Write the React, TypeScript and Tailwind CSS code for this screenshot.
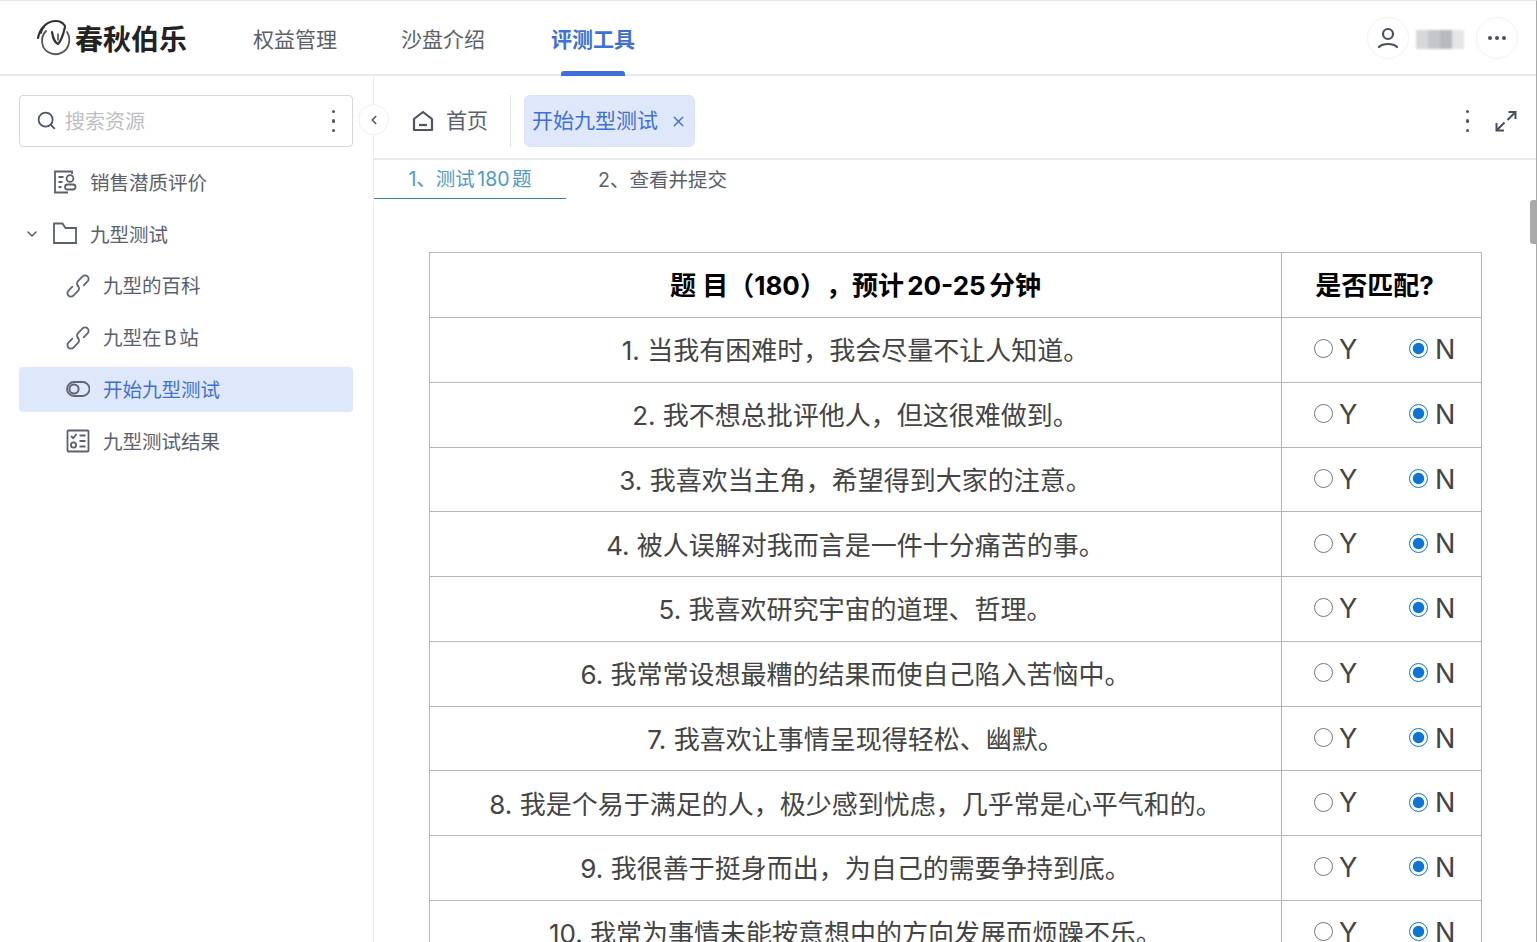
import { ChevronDown, ChevronLeft, Search, X } from "lucide-react";

const questions = [
  "1. 当我有困难时，我会尽量不让人知道。",
  "2. 我不想总批评他人，但这很难做到。",
  "3. 我喜欢当主角，希望得到大家的注意。",
  "4. 被人误解对我而言是一件十分痛苦的事。",
  "5. 我喜欢研究宇宙的道理、哲理。",
  "6. 我常常设想最糟的结果而使自己陷入苦恼中。",
  "7. 我喜欢让事情呈现得轻松、幽默。",
  "8. 我是个易于满足的人，极少感到忧虑，几乎常是心平气和的。",
  "9. 我很善于挺身而出，为自己的需要争持到底。",
  "10. 我常为事情未能按意想中的方向发展而烦躁不乐。",
];

function Logo() {
  return (
    <svg width="40" height="40" viewBox="0 0 40 40" fill="none" stroke="#333" strokeWidth="1.8" strokeLinecap="round">
      <path d="M3 20C5 10 12 3 21 3C25 3 28 5 30 8" strokeWidth="2.2" />
      <path d="M9 9C7 11 6 13 6 15" />
      <path d="M11 13C5 19 6 30 13 34C21 39 32 35 34 25C35 20 34 17 32 14" stroke="#555" />
      <path d="M17 14C18 20 19 24 23 26C25 24 28 18 30 9" strokeWidth="2.2" />
      <path d="M23 16V22" strokeWidth="1.4" />
    </svg>
  );
}

function ReportIcon() {
  return (
    <svg width="24" height="24" viewBox="0 0 24 24" fill="none" stroke="#5a616c" strokeWidth="1.8">
      <path d="M19 4V1.5H2V22.5H15" />
      <path d="M5.5 7h5M5.5 12h4M5.5 17h3" />
      <circle cx="17" cy="8.5" r="3.4" />
      <rect x="12" y="14.5" width="10.5" height="5" rx="2.5" />
    </svg>
  );
}

function FolderIcon() {
  return (
    <svg width="24" height="24" viewBox="0 0 24 24" fill="none" stroke="#5a616c" strokeWidth="1.8">
      <path d="M1 1.5h8.5l3 4.5H23v15H1z" />
    </svg>
  );
}

function ChainIcon() {
  return (
    <svg width="24" height="24" viewBox="0 0 24 24" fill="none" stroke="#5f6672" strokeWidth="1.8" strokeLinecap="round" className="overflow-visible">
      <g transform="rotate(-45 12 12)">
        <path d="M7.5 8.5H2a3.5 3.5 0 0 0 0 7H8.5a3.5 3.5 0 0 0 3.5-3.5" />
        <path d="M16.5 15.5H22a3.5 3.5 0 0 0 0-7H15.5a3.5 3.5 0 0 0-3.5 3.5" />
      </g>
    </svg>
  );
}

function SwitchIcon() {
  return (
    <svg width="24" height="24" viewBox="0 0 24 24" fill="none" stroke="#5f6672" strokeWidth="1.8">
      <rect x="1" y="5" width="22.5" height="14" rx="7" />
      <circle cx="8" cy="12" r="4.6" strokeWidth="2" />
    </svg>
  );
}

function ResultIcon() {
  return (
    <svg width="24" height="24" viewBox="0 0 24 24" fill="none" stroke="#5a616c" strokeWidth="1.8">
      <rect x="1.5" y="1.5" width="21" height="21" rx="1" />
      <path d="M5 7l2.2 2.2L10.5 5M13.5 6.5h6M13.5 12h6M13.5 17.5h6" />
      <circle cx="7.5" cy="16" r="2.6" />
    </svg>
  );
}

function HomeIcon() {
  return (
    <svg width="22" height="22" viewBox="0 0 22 22" fill="none" stroke="#4e5560" strokeWidth="2.2" strokeLinejoin="round">
      <path d="M2 9l9-7 9 7v11H2z" />
      <path d="M7 15h8" />
    </svg>
  );
}

function ExpandIcon() {
  return (
    <svg width="22" height="22" viewBox="0 0 22 22" fill="none" stroke="#47505c" strokeWidth="2">
      <path d="M13.5 2H20.5V9M20.5 2L12.5 10M1.5 13V20.5H9M1.5 20.5L9.5 12.5" />
    </svg>
  );
}

function UserIcon() {
  return (
    <svg width="24" height="24" viewBox="0 0 24 24" fill="none" stroke="#47505c" strokeWidth="2.2" strokeLinecap="round">
      <circle cx="12" cy="8" r="5" />
      <path d="M3 21c4-4 14-4 18 0" />
    </svg>
  );
}

function VDots({ className = "" }: { className?: string }) {
  return (
    <span className={`flex flex-col gap-[6px] ${className}`}>
      <i className="block w-[3.5px] h-[3.5px] rounded-full bg-[#4b5563]" />
      <i className="block w-[3.5px] h-[3.5px] rounded-full bg-[#4b5563]" />
      <i className="block w-[3.5px] h-[3.5px] rounded-full bg-[#4b5563]" />
    </span>
  );
}

function SideItem({ icon, label, level = 0, active = false }: { icon: React.ReactNode; label: string; level?: number; active?: boolean }) {
  return (
    <div
      className={`flex items-center h-[45px] mt-[6.8px] rounded-[4px] gap-[13px] text-[19.5px] ${
        level ? "pl-[47px]" : "pl-[34px]"
      } ${active ? "bg-[#dfe8fb] text-[#3f6fd8]" : "text-[#5a616c]"}`}
    >
      {icon}
      <span className="pt-[2px]">{label}</span>
    </div>
  );
}

export default function App() {
  return (
    <div className="relative flex flex-col h-[942px] overflow-hidden bg-white border-t border-r border-t-[#e5e6e8] border-r-[#a8a8a8] font-['Inter','Noto_Sans_CJK_SC',sans-serif] [text-autospace:normal] [text-spacing-trim:space-all]">
      <header className="flex items-center h-[75px] shrink-0 border-b-2 border-[#e8e9eb]">
        <div className="flex items-center ml-[35px] w-[218px]">
          <Logo />
          <span className="text-[28px] leading-none font-bold text-[#222] font-['Noto_Sans_CJK_SC',sans-serif]">春秋伯乐</span>
        </div>
        <nav className="flex h-full text-[21px] text-[#5a616c] gap-[64px] pt-[4px]">
          <span className="flex items-center">权益管理</span>
          <span className="flex items-center">沙盘介绍</span>
          <span className="relative flex items-center ml-[2px] font-bold text-[#3f6fd8]">
            评测工具
            <i className="absolute left-[10px] right-[10px] bottom-[-2px] h-[5px] rounded-t-[3px] bg-[#3f6fd8]" />
          </span>
        </nav>
        <div className="ml-auto flex items-center mr-[18px]">
          <span className="flex items-center justify-center w-[42px] h-[42px] rounded-full border border-[#f3f3f4]">
            <UserIcon />
          </span>
          <span className="flex ml-[7px] mt-[4px] h-[19px] w-[48px] blur-[1px]">
            <i className="w-[12px] bg-[#d6d8da]" />
            <i className="w-[12px] bg-[#c4c7ca]" />
            <i className="w-[12px] bg-[#b6babd]" />
            <i className="w-[12px] bg-[#e3e5e7]" />
          </span>
          <span className="flex items-center justify-center gap-[3px] ml-[12px] w-[42px] h-[42px] rounded-full border border-[#f3f3f4]">
            <i className="w-[4px] h-[4px] rounded-full bg-[#47505c]" />
            <i className="w-[4px] h-[4px] rounded-full bg-[#47505c]" />
            <i className="w-[4px] h-[4px] rounded-full bg-[#47505c]" />
          </span>
        </div>
      </header>

      <div className="flex flex-1 min-h-0">
        <aside className="relative w-[374px] shrink-0 border-r border-[#eceded] pl-[19px] pr-[20px] pt-[19px]">
          <div className="flex items-center h-[52px] rounded-[4px] border border-[#d5d7da] pl-[16px] pr-[17px]">
            <Search size={21} strokeWidth={2} className="text-[#4b5563] -mt-[2px]" />
            <span className="ml-[8px] pt-[2px] text-[20px] text-[#bcbfc4]">搜索资源</span>
            <VDots className="ml-auto" />
          </div>
          <div className="pt-[6px]">
            <SideItem icon={<ReportIcon />} label="销售潜质评价" />
            <div className="flex items-center h-[45px] mt-[6.8px] text-[19.5px] text-[#5a616c]">
              <ChevronDown size={16} strokeWidth={2} className="ml-[5px] mr-[13px] text-[#4b5563]" />
              <FolderIcon />
              <span className="ml-[13px] pt-[3px]">九型测试</span>
            </div>
            <SideItem level={1} icon={<ChainIcon />} label="九型的百科" />
            <SideItem level={1} icon={<ChainIcon />} label="九型在B站" />
            <SideItem level={1} active icon={<SwitchIcon />} label="开始九型测试" />
            <SideItem level={1} icon={<ResultIcon />} label="九型测试结果" />
          </div>
          <button className="absolute right-[-16px] top-[28px] flex items-center justify-center w-[31px] h-[31px] rounded-full bg-white border border-[#f0f0f1]">
            <ChevronLeft size={14} strokeWidth={2.6} className="text-[#4b5563]" />
          </button>
        </aside>

        <main className="flex-1 min-w-0">
          <div className="flex items-center h-[84px] pt-[8px] border-b-2 border-[#e8e9eb]">
            <div className="flex items-center ml-[38px] gap-[12px] text-[21px] text-[#5a616c]">
              <HomeIcon />
              <span>首页</span>
            </div>
            <i className="ml-[22px] h-[52px] w-px bg-[#e3e4e6]" />
            <div className="flex items-center h-[52px] ml-[13px] pl-[7px] pr-[7px] gap-[12px] rounded-[6px] border border-[#d9e3f8] bg-[#dfe8fb] text-[21px] text-[#3f6fd8]">
              <span>开始九型测试</span>
              <X size={17} strokeWidth={2} />
            </div>
            <VDots className="ml-auto mr-[26px]" />
            <span className="mr-[19px]">
              <ExpandIcon />
            </span>
          </div>
          <div className="flex h-[39px] text-[19.5px]">
            <span className="flex items-center justify-center w-[192px] pt-[2px] border-b border-[#3f7fb5] text-[#4e9ac8]">1、测试180题</span>
            <span className="flex items-center pt-[2px] ml-[32px] text-[#5a616c]">2、查看并提交</span>
          </div>
          <table className="mt-[53px] ml-[55px] w-[1053px] table-fixed border-collapse text-[26px] text-[#444]">
            <colgroup>
              <col className="w-[852px]" />
              <col />
            </colgroup>
            <thead>
              <tr className="h-[65px] text-black">
                <th className="border border-[#b5b5b5] font-bold text-center">题 目（180），预计20-25分钟</th>
                <th className="border border-[#b5b5b5] pr-[14px] font-bold text-center">是否匹配?</th>
              </tr>
            </thead>
            <tbody>
              {questions.map((q, i) => (
                <tr key={q} className="h-[64.75px]">
                  <td className="border border-[#b5b5b5] pt-[2px] text-center">{q}</td>
                  <td className="border border-[#b5b5b5] pl-[32px] pt-[1px] text-[27px]">
                    <div className="flex">
                      <label className="flex items-center gap-[6px] w-[95px]">
                        <input type="radio" name={`q${i}`} className="w-[19px] h-[19px] m-0 -mt-[3px]" />
                        Y
                      </label>
                      <label className="flex items-center gap-[7px]">
                        <input type="radio" name={`q${i}`} defaultChecked className="w-[19px] h-[19px] m-0 -mt-[3px] accent-[#0b76d6]" />
                        N
                      </label>
                    </div>
                  </td>
                </tr>
              ))}
            </tbody>
          </table>
        </main>
      </div>
      <i className="absolute right-0 top-[199px] w-[6px] h-[44px] rounded-l-[3px] bg-[#a9a9a9]" />
    </div>
  );
}
